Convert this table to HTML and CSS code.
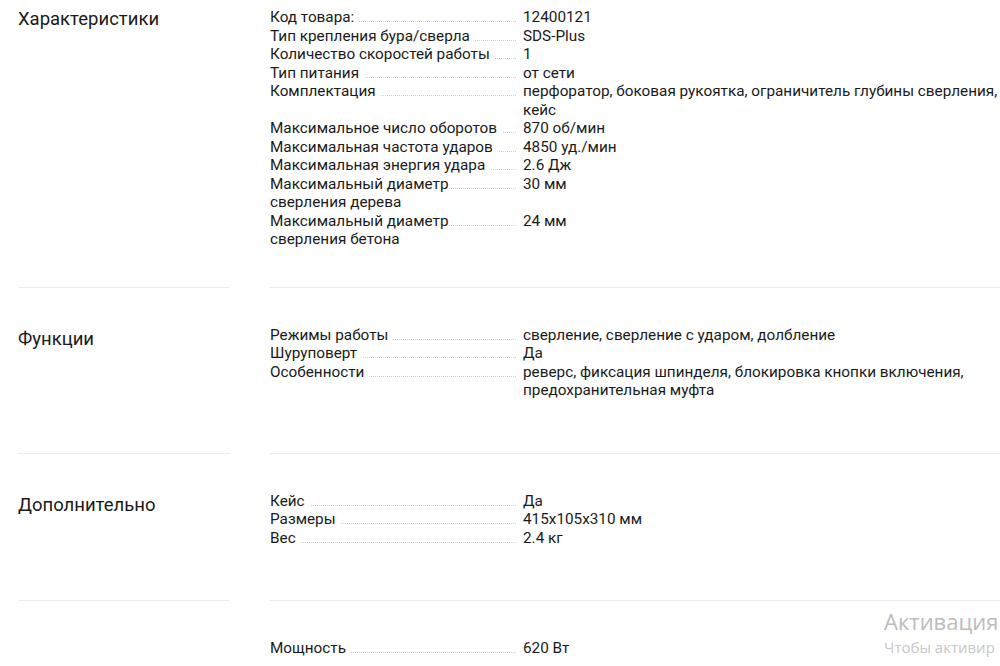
FILE: index.html
```html
<!DOCTYPE html>
<html lang="ru">
<head>
<meta charset="utf-8">
<title>Характеристики</title>
<link rel="stylesheet" href="styles.css">
</head>
<body>
<div class="specs">
  <section class="group group-first">
    <h2 class="group-title">Характеристики</h2>
    <div class="group-body">
      <div class="row"><div class="label"><span>Код товара:</span></div><div class="value">12400121</div></div>
      <div class="row"><div class="label"><span>Тип крепления бура/сверла</span></div><div class="value">SDS-Plus</div></div>
      <div class="row"><div class="label"><span>Количество скоростей работы</span></div><div class="value">1</div></div>
      <div class="row"><div class="label"><span>Тип питания</span></div><div class="value">от сети</div></div>
      <div class="row"><div class="label"><span>Комплектация</span></div><div class="value">перфоратор, боковая рукоятка, ограничитель глубины сверления, кейс</div></div>
      <div class="row"><div class="label"><span>Максимальное число оборотов</span></div><div class="value">870 об/мин</div></div>
      <div class="row"><div class="label"><span>Максимальная частота ударов</span></div><div class="value">4850 уд./мин</div></div>
      <div class="row"><div class="label"><span>Максимальная энергия удара</span></div><div class="value">2.6 Дж</div></div>
      <div class="row"><div class="label"><span>Максимальный диаметр сверления дерева</span></div><div class="value">30 мм</div></div>
      <div class="row"><div class="label"><span>Максимальный диаметр сверления бетона</span></div><div class="value">24 мм</div></div>
    </div>
  </section>
  <section class="group">
    <h2 class="group-title">Функции</h2>
    <div class="group-body">
      <div class="row"><div class="label"><span>Режимы работы</span></div><div class="value">сверление, сверление с ударом, долбление</div></div>
      <div class="row"><div class="label"><span>Шуруповерт</span></div><div class="value">Да</div></div>
      <div class="row"><div class="label"><span>Особенности</span></div><div class="value">реверс, фиксация шпинделя, блокировка кнопки включения, предохранительная муфта</div></div>
    </div>
  </section>
  <section class="group">
    <h2 class="group-title">Дополнительно</h2>
    <div class="group-body">
      <div class="row"><div class="label"><span>Кейс</span></div><div class="value">Да</div></div>
      <div class="row"><div class="label"><span>Размеры</span></div><div class="value">415x105x310 мм</div></div>
      <div class="row"><div class="label"><span>Вес</span></div><div class="value">2.4 кг</div></div>
    </div>
  </section>
  <section class="group group-last">
    <h2 class="group-title"></h2>
    <div class="group-body">
      <div class="row"><div class="label"><span>Мощность</span></div><div class="value">620 Вт</div></div>
    </div>
  </section>
</div>
<div class="activation">
  <div class="activation-title">Активация</div>
  <div class="activation-text">Чтобы активир</div>
</div>
</body>
</html>
```

FILE: styles.css
```css
html, body {
  margin: 0;
  padding: 0;
  background: #fff;
  overflow: hidden;
}

body {
  font-family: Roboto, "Liberation Sans", sans-serif;
  color: #1a1a1a;
  width: 1000px;
  height: 666px;
  position: relative;
}

.specs {
  padding-left: 18px;
  width: 982px;
  overflow: hidden;
}

.group {
  display: grid;
  grid-template-columns: 212px 750px;
  column-gap: 40px;
}

.group-title {
  margin: 0;
  padding: 40px 0 0;
  font-size: 18.5px;
  font-weight: 400;
  line-height: 22px;
  color: #1a1a1a;
  border-bottom: 1px solid #ececec;
}

.group-body {
  padding: 38px 0 53px;
  border-bottom: 1px solid #ececec;
}

.group-first .group-title {
  padding-top: 8px;
}

.group-first .group-body {
  padding-top: 8px;
  padding-bottom: 38px;
}

.group-last .group-title,
.group-last .group-body {
  border-bottom: none;
  padding-bottom: 0;
}

.row {
  display: grid;
  grid-template-columns: 253px 497px;
  font-size: 15.3px;
  line-height: 18.5px;
}

.label {
  position: relative;
  padding-right: 20px;
}

.label::before {
  content: "";
  position: absolute;
  left: 0;
  right: 7px;
  top: 13px;
  border-bottom: 1px dotted #cfcfcf;
}

.label span {
  position: relative;
  background: #fff;
  padding-right: 5px;
}

.activation {
  position: absolute;
  left: 884px;
  top: 605px;
  white-space: nowrap;
  font-family: "Open Sans", "Noto Sans", sans-serif;
  color: #bcbcbc;
}

.activation-title {
  font-size: 22px;
  line-height: 32px;
}

.activation-text {
  font-size: 15px;
  line-height: 20px;
  color: #c8c8c8;
}
```
